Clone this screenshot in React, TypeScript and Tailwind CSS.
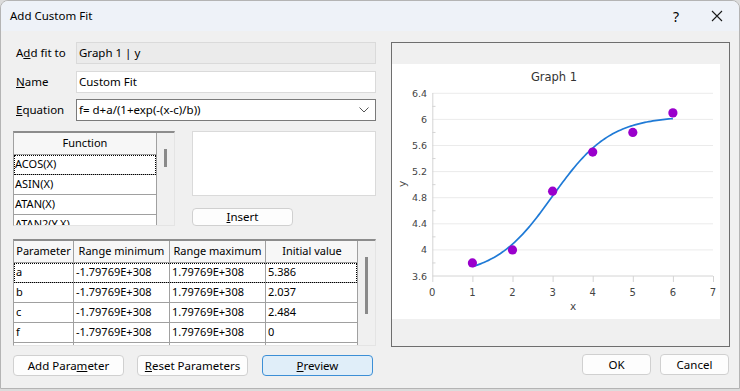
import React from "react";

const fit = (x: number) => 3.6 + 2.45 / (1 + Math.exp(-(x - 3) / 0.72));
const px = (x: number) => 40.3 + x * 40.1;
const py = (y: number) => 212 - ((y - 3.6) / 0.4) * 26.1;

function Chart() {
  const yTicks = [3.6, 4, 4.4, 4.8, 5.2, 5.6, 6, 6.4];
  const minor = [3.8, 4.2, 4.6, 5.0, 5.4, 5.8, 6.2];
  const pts: string[] = [];
  for (let i = 0; i <= 100; i++) {
    const x = 1 + (5 * i) / 100;
    pts.push(`${i === 0 ? "M" : "L"}${px(x).toFixed(2)},${py(fit(x)).toFixed(2)}`);
  }
  const data: [number, number][] = [
    [1, 3.8],
    [2, 4.0],
    [3, 4.9],
    [4, 5.5],
    [5, 5.8],
    [6, 6.1],
  ];
  return (
    <svg width="328" height="255" viewBox="0 0 328 255" style={{ fontFamily: "'DejaVu Sans', Verdana, sans-serif" }}>
      <text x="162" y="17" fontSize="11.5" fill="#333" textAnchor="middle">
        Graph 1
      </text>
      {yTicks.map((v) => (
        <g key={v}>
          <line x1="40.3" x2="321" y1={py(v)} y2={py(v)} stroke={v === 3.6 ? "#d4d4d4" : "#ebebeb"} strokeWidth="1" />
          <text x="35" y={py(v) + 3.5} fontSize="9.5" fill="#444" textAnchor="end">
            {v === 4 || v === 6 ? String(v) : v.toFixed(1)}
          </text>
        </g>
      ))}
      {minor.map((v) => (
        <line key={v} x1="40.3" x2="43.5" y1={py(v)} y2={py(v)} stroke="#d4d4d4" strokeWidth="1" />
      ))}
      <line x1="40.8" x2="40.8" y1="29" y2="212" stroke="#d4d4d4" strokeWidth="1" />
      {[0, 1, 2, 3, 4, 5, 6, 7].map((v) => (
        <g key={v}>
          <line x1={px(v) + 0.5} x2={px(v) + 0.5} y1="212" y2="218" stroke="#d4d4d4" strokeWidth="1" />
          <text x={px(v)} y="231.5" fontSize="10" fill="#444" textAnchor="middle">
            {v}
          </text>
        </g>
      ))}
      <text x="181" y="246" fontSize="10.5" fill="#444" textAnchor="middle">
        x
      </text>
      <text x="0" y="0" fontSize="10.5" fill="#444" textAnchor="middle" transform="translate(14,120) rotate(-90)">
        y
      </text>
      <path d={pts.join(" ")} fill="none" stroke="#1f7ad6" strokeWidth="1.7" />
      {data.map(([x, y]) => (
        <circle key={x} cx={px(x)} cy={py(y)} r="4.6" fill="#9a00cc" />
      ))}
    </svg>
  );
}

function Btn({ children, w, primary }: { children: React.ReactNode; w: string; primary?: boolean }) {
  return (
    <div
      className={`${w} h-[21px] flex items-center justify-center rounded-[4px] border text-[11.5px] whitespace-nowrap ${
        primary ? "bg-[#e0eef9] border-[#3c8fd6]" : "bg-[#fdfdfd] border-[#d0d0d0]"
      }`}
    >
      {children}
    </div>
  );
}

export default function App() {
  const funcs = ["ACOS(X)", "ASIN(X)", "ATAN(X)", "ATAN2(Y,X)"];
  const params = [
    ["a", "-1.79769E+308", "1.79769E+308", "5.386"],
    ["b", "-1.79769E+308", "1.79769E+308", "2.037"],
    ["c", "-1.79769E+308", "1.79769E+308", "2.484"],
    ["f", "-1.79769E+308", "1.79769E+308", "0"],
    ["", "", "", ""],
  ];
  const cols = ["w-[60px]", "w-[96px]", "w-[96px]", "w-[92px]"];
  return (
    <div className="w-[740px] h-[391px] bg-[#dcdcdc] font-['Noto_Sans',sans-serif] text-black overflow-hidden whitespace-nowrap">
      <div className="w-[740px] h-[389px] flex flex-col rounded-t-[8px] border border-[#b4b4b4] overflow-hidden bg-[#f0f0f0]">
        {/* Title bar */}
        <div className="h-[30px] shrink-0 bg-[#eef2f8] flex items-center pl-[9px] pr-[14px]">
          <div className="text-[11.5px] flex-1">Add Custom Fit</div>
          <div className="text-[14px] w-[20px] text-center mr-[25px]">?</div>
          <svg width="12" height="12" viewBox="0 0 12 12" className="mr-[2px]">
            <path d="M1 1 L11 11 M11 1 L1 11" stroke="#1a1a1a" strokeWidth="1.1" />
          </svg>
        </div>
        {/* Body */}
        <div className="flex flex-1 pl-[12px] pt-[11px]">
          {/* Left column */}
          <div className="w-[363px] flex flex-col text-[11px]">
            <div className="flex items-center h-[22px]">
              <div className="w-[63px] pl-[3px] text-[11.5px]">
                A<u>d</u>d fit to
              </div>
              <div className="w-[300px] h-[22px] bg-[#ebebeb] border border-[#dadada] flex items-center px-[2px] text-[11.5px]">
                Graph 1 | y
              </div>
            </div>
            <div className="flex items-center h-[22px] mt-[7px] text-[11.5px]">
              <div className="w-[63px] pl-[3px]">
                <u>N</u>ame
              </div>
              <div className="w-[300px] h-[22px] bg-white border border-[#dadada] flex items-center px-[2px]">
                Custom Fit
              </div>
            </div>
            <div className="flex items-center h-[22px] mt-[6px] text-[11.5px]">
              <div className="w-[63px] pl-[3px]">
                <u>E</u>quation
              </div>
              <div className="w-[300px] h-[22px] bg-white border border-[#7a7a7a] flex items-center pl-[2px] pr-[6px]">
                <div className="flex-1">f= d+a/(1+exp(-(x-c)/b))</div>
                <svg width="10" height="6" viewBox="0 0 10 6">
                  <path d="M0.5 0.5 L5 5 L9.5 0.5" fill="none" stroke="#555" strokeWidth="1" />
                </svg>
              </div>
            </div>
            {/* Function list + text area */}
            <div className="flex mt-[10px] h-[95px]">
              <div className="w-[162px] h-[95px] flex border-t-2 border-[#8c8c8c] border-l border-l-[#a0a0a0] border-b border-b-[#e4e4e4] border-r border-r-[#e4e4e4] overflow-hidden bg-[#f0f0f0]">
                <div className="w-[143px] flex flex-col bg-white border-r border-[#a0a0a0]">
                  <div className="h-[22px] shrink-0 flex items-center justify-center border-b border-[#a0a0a0] bg-[#f7f7f7]">
                    Function
                  </div>
                  {funcs.map((f, i) => (
                    <div
                      key={f}
                      className={`h-[20px] shrink-0 flex items-center pl-[1px] border-b border-[#a0a0a0] ${
                        i === 0 ? "outline-1 outline-dotted outline-black -outline-offset-1" : ""
                      }`}
                    >
                      {f}
                    </div>
                  ))}
                </div>
                <div className="flex-1 flex justify-center pt-[16px]">
                  <div className="w-[3px] h-[18px] bg-[#8a8a8a]" />
                </div>
              </div>
              <div className="ml-[17px] flex flex-col items-start">
                <div className="w-[184px] h-[66px] bg-white border border-[#dadada]" />
                <div className="mt-[12px] w-[101px] h-[18px] rounded-[4px] border border-[#d0d0d0] bg-[#fdfdfd] flex items-center justify-center text-[11.5px]">
                  <span>
                    <u>I</u>nsert
                  </span>
                </div>
              </div>
            </div>
            {/* Parameter table */}
            <div className="mt-[13px] w-[363px] h-[107px] flex border-t-2 border-[#8c8c8c] border-l border-l-[#a0a0a0] border-b border-b-[#e4e4e4] border-r border-r-[#e4e4e4] overflow-hidden bg-[#f0f0f0]">
              <div className="w-[344px] flex flex-col bg-white border-r border-[#a0a0a0]">
                <div className="h-[22px] shrink-0 flex border-b border-[#a0a0a0] bg-[#f7f7f7]">
                  {["Parameter", "Range minimum", "Range maximum", "Initial value"].map((h, i) => (
                    <div
                      key={h}
                      className={`${cols[i]} shrink-0 flex items-center justify-center overflow-hidden ${i < 3 ? "border-r border-[#a0a0a0]" : ""}`}
                    >
                      {h}
                    </div>
                  ))}
                </div>
                {params.map((r, ri) => (
                  <div
                    key={ri}
                    className={`h-[20px] shrink-0 flex border-b border-[#a0a0a0] ${
                      ri === 0 ? "outline-1 outline-dotted outline-black -outline-offset-1" : ""
                    }`}
                  >
                    {r.map((c, ci) => (
                      <div
                        key={ci}
                        className={`${cols[ci]} shrink-0 flex items-center pl-[2px] ${ci < 3 ? "border-r border-[#a0a0a0]" : ""}`}
                      >
                        {c}
                      </div>
                    ))}
                  </div>
                ))}
              </div>
              <div className="flex-1 flex justify-center pt-[16px]">
                <div className="w-[3px] h-[57px] bg-[#8a8a8a]" />
              </div>
            </div>
            {/* Buttons */}
            <div className="mt-[9px] flex">
              <Btn w="w-[111px]">
                <span>
                  Add Para<u>m</u>eter
                </span>
              </Btn>
              <div className="ml-[13px]">
                <Btn w="w-[111px]">
                  <span>
                    <u>R</u>eset Parameters
                  </span>
                </Btn>
              </div>
              <div className="ml-[14px]">
                <Btn w="w-[111px]" primary>
                  <span>
                    <u>P</u>review
                  </span>
                </Btn>
              </div>
            </div>
          </div>
          {/* Right column */}
          <div className="ml-[15px] flex flex-col">
            <div className="w-[339px] h-[305px] border border-[#6e6e6e] bg-[#f0f0f0] pt-[21px]">
              <div className="w-[328px] h-[255px] bg-white">
                <Chart />
              </div>
            </div>
            <div className="mt-[7px] flex justify-end pr-[1px]">
              <Btn w="w-[69px]">OK</Btn>
              <div className="ml-[9px]">
                <Btn w="w-[69px]">Cancel</Btn>
              </div>
            </div>
          </div>
        </div>
      </div>
    </div>
  );
}
